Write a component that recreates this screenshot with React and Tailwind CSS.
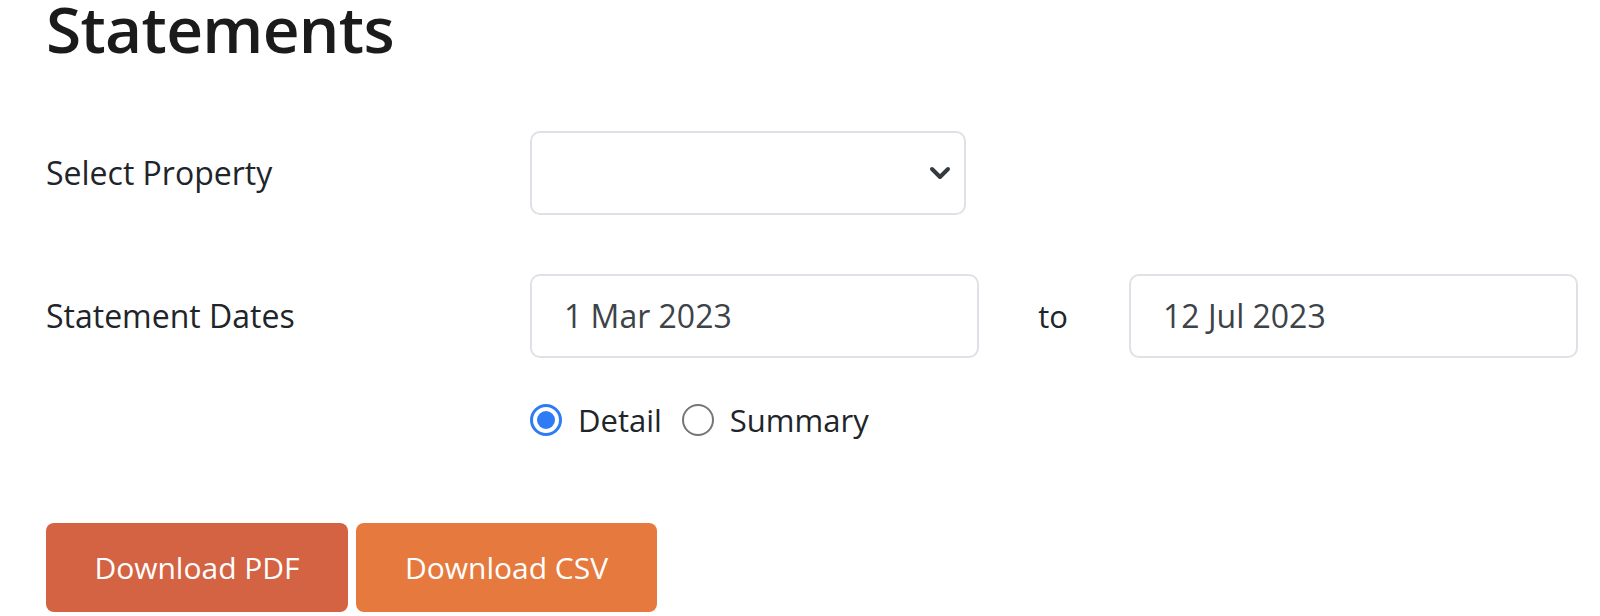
import { useState } from 'react';

const Radio = ({ checked, label, onClick }) => (
    <label className="flex items-center cursor-pointer" onClick={onClick}>
        {checked ? (
            <span className="w-[32px] h-[32px] rounded-full border-[3px] border-[#2f7bf5] flex items-center justify-center bg-white">
                <span className="w-[18px] h-[18px] rounded-full bg-[#2f7bf5]" />
            </span>
        ) : (
            <span className="w-[32px] h-[32px] rounded-full border-[2.5px] border-[#767676] bg-white" />
        )}
        <span className="ml-[16px] text-[31px] text-[#212529]">{label}</span>
    </label>
);

const App = () => {
    const [mode, setMode] = useState('detail');

    return (
        <div className="w-[1600px] h-[616px] bg-white pl-[46px] overflow-hidden" style={{ fontFamily: '"Open Sans", "Noto Sans", sans-serif' }}>
            <h1 className="text-[64px] font-semibold text-[#1b1b1b] leading-[58px] tracking-[-0.7px]">Statements</h1>

            {/* Property */}
            <div className="flex items-center mt-[73px]">
                <label className="w-[484px] text-[32px] text-[#212529]">Select Property</label>
                <div className="relative w-[436px] h-[84px] border-2 border-[#dee2e6] rounded-[10px] bg-white">
                    <svg className="absolute right-[13px] top-1/2 -translate-y-1/2" width="22" height="14" viewBox="0 0 22 14" fill="none" stroke="#343a40" strokeWidth="4" strokeLinecap="round" strokeLinejoin="round">
                        <path d="M3 3l8 8 8-8" />
                    </svg>
                </div>
            </div>

            {/* Dates */}
            <div className="flex items-center mt-[59px]">
                <label className="w-[484px] text-[32px] text-[#212529]">Statement Dates</label>
                <div className="w-[449px] h-[84px] border-2 border-[#dee2e6] rounded-[10px] flex items-center pl-[32px] text-[32px] text-[#3d4349]">1 Mar 2023</div>
                <span className="w-[150px] text-center text-[31px] text-[#212529] pr-[2px]">to</span>
                <div className="w-[449px] h-[84px] border-2 border-[#dee2e6] rounded-[10px] flex items-center pl-[32px] text-[32px] text-[#3d4349]">12 Jul 2023</div>
            </div>

            {/* Type */}
            <div className="flex items-center h-[46px] gap-[20px] ml-[484px] mt-[39px]">
                <Radio checked={mode === 'detail'} label="Detail" onClick={() => setMode('detail')} />
                <Radio checked={mode === 'summary'} label="Summary" onClick={() => setMode('summary')} />
            </div>

            <div className="flex gap-[8px] mt-[80px]">
                <button className="w-[302px] h-[89px] rounded-[8px] bg-[#d46343] text-white text-[30px]">Download PDF</button>
                <button className="w-[301px] h-[89px] rounded-[8px] bg-[#e67a3e] text-white text-[30px]">Download CSV</button>
            </div>
        </div>
    );
};

export default App;
